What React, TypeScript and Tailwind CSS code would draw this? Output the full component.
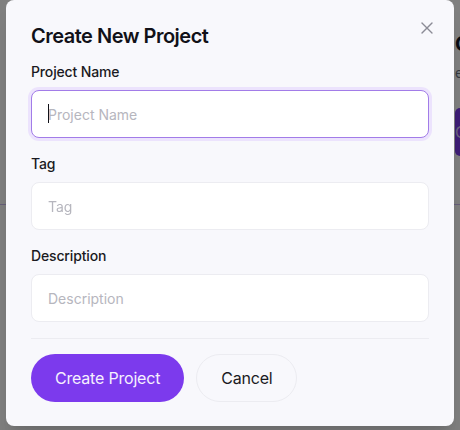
import { X } from "lucide-react";

const fields = [
  { label: "Project Name", placeholder: "Project Name", active: true },
  { label: "Tag", placeholder: "Tag", active: false },
  { label: "Description", placeholder: "Description", active: false },
];

const App = () => {
  return (
    <div className="relative h-[430px] w-[460px] overflow-hidden bg-white font-['Inter',sans-serif]">
      {/* page behind the dialog */}
      <div className="flex flex-col">
        <div className="flex flex-col pl-[455px] pt-[30px]">
          <h2 className="whitespace-nowrap text-xl leading-7 font-bold text-[#111827]">
            Creative
          </h2>
          <p className="mt-[5px] whitespace-nowrap text-sm leading-5 text-[#6b7280]">
            eams
          </p>
          <div className="mt-[25px] flex h-12 items-center whitespace-nowrap rounded-l-lg bg-[#7c3aed] text-base text-[#d9c8fb]">
            <span>Create</span>
          </div>
        </div>
        <div className="mt-[48px] h-px w-full bg-[#cdbdf2]" />
      </div>

      <div className="absolute inset-0 bg-black/50" />

      <div className="absolute left-[6px] top-0 w-[448px] rounded-lg bg-[#f8f8fc] px-[25px] pt-[22px] pb-6 shadow-xl">
        <button className="absolute right-[17px] top-[18px] text-[#8b8b96]">
          <X size={20} strokeWidth={1.6} />
        </button>

        <h1 className="text-xl leading-7 font-semibold tracking-[-0.5px] text-[#111118]">
          Create New Project
        </h1>

        <div className="mt-3 flex flex-col gap-4">
          {fields.map((f) => (
            <div key={f.label} className="flex flex-col gap-2">
              <label className="text-sm leading-5 font-medium tracking-[-0.15px] text-[#1a1a22]">
                {f.label}
              </label>
              <div className="relative">
                <input
                  autoFocus={f.active}
                  placeholder={f.placeholder}
                  className={
                    f.active
                      ? "h-12 w-full rounded-lg border border-[#a27ce8] bg-white px-4 text-sm text-[#1a1a22] outline-none ring-[3px] ring-[#ece3fd] placeholder:text-[#b6b6be]"
                      : "h-12 w-full rounded-lg border border-[#ececf1] bg-white px-4 text-sm text-[#1a1a22] outline-none placeholder:text-[#b6b6be]"
                  }
                />
                {f.active && (
                  <span className="pointer-events-none absolute left-[17px] top-[14px] h-[19px] w-px bg-[#111118]" />
                )}
              </div>
            </div>
          ))}
        </div>

        <div className="mt-4 flex gap-3 border-t border-[#ececf1] pt-[15px]">
          <button className="h-12 rounded-full bg-[#7c3aed] px-6 text-base tracking-[-0.2px] text-[#f5f0fe]">
            Create Project
          </button>
          <button className="h-12 rounded-full border border-[#ececf1] px-6 text-base tracking-[-0.2px] text-[#1a1a22]">
            Cancel
          </button>
        </div>
      </div>
    </div>
  );
};

export default App;
